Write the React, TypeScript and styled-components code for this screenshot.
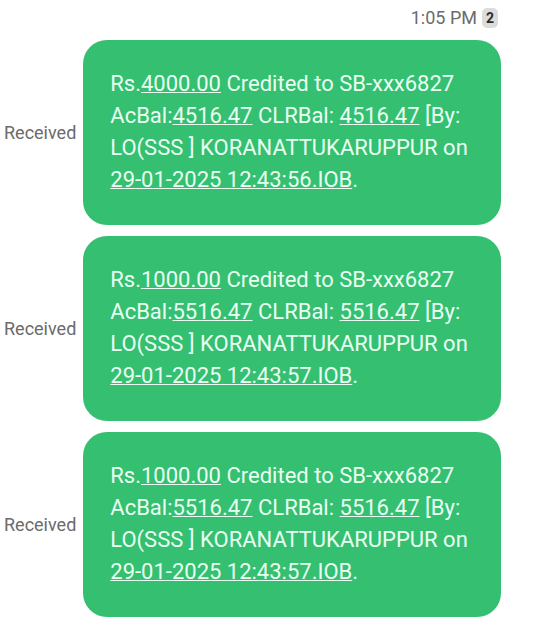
import { createGlobalStyle, styled } from 'styled-components'

interface Message {
  id: number
  amount: string
  balance: string
  date: string
}

const messages: Message[] = [
  { id: 1, amount: '4000.00', balance: '4516.47', date: '29-01-2025 12:43:56.IOB' },
  { id: 2, amount: '1000.00', balance: '5516.47', date: '29-01-2025 12:43:57.IOB' },
  { id: 3, amount: '1000.00', balance: '5516.47', date: '29-01-2025 12:43:57.IOB' },
]

const MessageRow = ({ message }: { message: Message }) => {
  const { amount, balance, date } = message

  return (
    <StyledRow>
      <StyledStatus>Received</StyledStatus>
      <StyledBubble>
        Rs.<StyledLink href="#">{amount}</StyledLink> Credited to SB-xxx6827
        <br />
        AcBal:<StyledLink href="#">{balance}</StyledLink> CLRBal:{' '}
        <StyledLink href="#">{balance}</StyledLink> [By:
        <br />
        LO(SSS ] KORANATTUKARUPPUR on
        <br />
        <StyledLink href="#">{date}</StyledLink>.
      </StyledBubble>
    </StyledRow>
  )
}

const App = () => {
  return (
    <>
      <GlobalStyle />
      <StyledThread>
        <StyledHeader>
          <time>1:05 PM</time>
          <StyledSim>2</StyledSim>
        </StyledHeader>
        <StyledList>
          {messages.map(message => (
            <MessageRow key={message.id} message={message} />
          ))}
        </StyledList>
      </StyledThread>
    </>
  )
}

export default App

const GlobalStyle = createGlobalStyle`
  * {
    box-sizing: border-box;
  }

  body {
    margin: 0;
    background: #ffffff;
    font-family: Roboto, 'Liberation Sans', sans-serif;
  }
`

const StyledThread = styled.main`
  padding: 8px 39px 24px 4px;
`

const StyledHeader = styled.header`
  display: flex;
  justify-content: flex-end;
  align-items: center;
  gap: 5px;

  margin-bottom: 12px;
  padding-right: 3px;

  font-size: 18px;
  line-height: 20px;
  color: #6b6b6b;
`

const StyledSim = styled.span`
  width: 16px;
  height: 20px;
  border-radius: 5px;
  background: #dcdcdc;

  font-size: 14px;
  font-weight: 700;
  line-height: 20px;
  text-align: center;
  color: #2b2b2b;
`

const StyledList = styled.div`
  display: flex;
  flex-direction: column;
  gap: 11px;
`

const StyledRow = styled.article`
  display: flex;
  align-items: center;
  gap: 7px;
`

const StyledStatus = styled.span`
  flex: 0 0 72px;

  font-size: 18px;
  line-height: 20px;
  color: #6b6b6b;
`

const StyledBubble = styled.p`
  flex: 1;
  margin: 0;
  padding: 28px 0 29px 27px;
  border-radius: 24px;
  background: #34bf71;

  font-size: 22px;
  line-height: 32px;
  white-space: nowrap;
  color: #e9fff2;
`

const StyledLink = styled.a`
  color: inherit;
  text-decoration: underline;
  text-decoration-thickness: 1px;
  text-decoration-skip-ink: none;
`
